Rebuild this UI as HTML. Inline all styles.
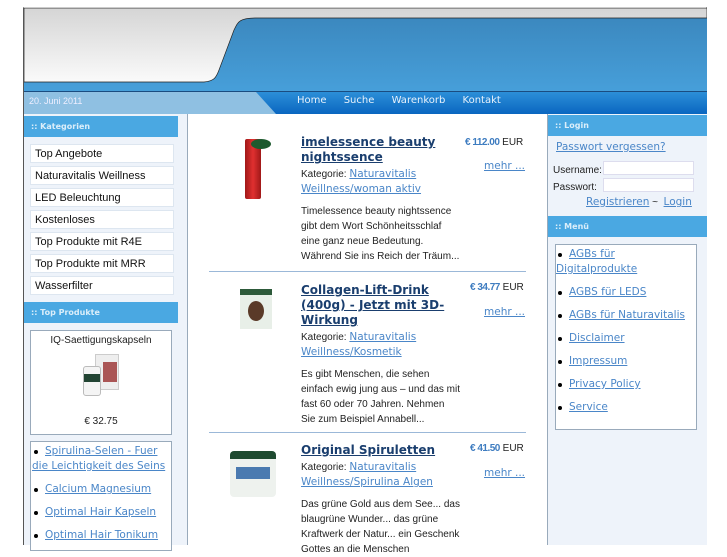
<!DOCTYPE html><html><head><meta charset="utf-8"><style>
*{margin:0;padding:0;box-sizing:border-box}
body{width:727px;height:545px;overflow:hidden;background:#fff;position:relative;font-family:"Liberation Sans",sans-serif;font-size:10px;color:#222}
.a{position:absolute}
a{color:#4a86c8;text-decoration:underline;font-family:"DejaVu Sans",sans-serif;font-size:10.5px}
.hd{background:#4aa8e2;color:#dbeefa;font:bold 8px "DejaVu Sans",sans-serif;padding-left:7px;line-height:21px}
.cat{position:absolute;left:30px;width:144px;height:19px;background:#fff;border:1px solid #dde6f0;font-size:11px;line-height:19px;padding-left:4px;color:#111}
.t{font:bold 12px "DejaVu Sans",sans-serif;color:#1a3e6e;text-decoration:underline;line-height:15px}
.d{line-height:15px;font-size:10px}
.pr{color:#3e7cc0;font-weight:bold;letter-spacing:-0.5px}
ul{list-style:none}
li{position:relative;padding-left:13px;margin-bottom:8px;line-height:15px}
li:before{content:"";position:absolute;left:2px;top:6px;width:4px;height:4px;border-radius:50%;background:#000}
</style></head><body>
<div class="a" style="left:23px;top:7px;width:684px;height:538px;border-left:1px solid #555;border-right:1px solid #555;border-top:1px solid #ccc"></div>
<svg class="a" style="left:24px;top:8px" width="683" height="106">
<defs><linearGradient id="g" x1="0" y1="0" x2="0" y2="1"><stop offset="0" stop-color="#d5d5d5"/><stop offset="1" stop-color="#fafafa"/></linearGradient>
<linearGradient id="b" x1="0" y1="0" x2="0" y2="1"><stop offset="0" stop-color="#3a85bb"/><stop offset="1" stop-color="#4aa6e2"/></linearGradient>
<linearGradient id="n" x1="0" y1="0" x2="0" y2="1"><stop offset="0" stop-color="#2c8fd8"/><stop offset="1" stop-color="#0a66c0"/></linearGradient></defs>
<rect width="683" height="106" fill="url(#b)"/>
<path d="M0 0H683V10H232C215 10 214 14 210 22L195 62C192 70 190 73 180 74H0Z" fill="url(#g)" stroke="#222" stroke-width="0.7"/>
<rect y="84" width="683" height="22" fill="url(#n)"/>
<rect y="83" width="683" height="1" fill="#1a4c80"/>
<path d="M0 84H232L252 106H0Z" fill="#8fc0e2"/>
</svg>
<div class="a" style="left:29px;top:96px;color:#eef;font-size:9px">20. Juni 2011</div>
<div class="a" style="left:297px;top:95px;color:#e8f2fc;font:10px 'DejaVu Sans',sans-serif;word-spacing:14px">Home Suche Warenkorb&nbsp;Kontakt</div>
<div class="a" style="left:24px;top:114px;width:164px;height:431px;background:#eef3fa;border-right:1px solid #9ab"></div>
<div class="a hd" style="left:24px;top:116px;width:154px">:: Kategorien</div>
<div class="cat" style="top:144px">Top Angebote</div>
<div class="cat" style="top:166px">Naturavitalis Weillness</div>
<div class="cat" style="top:188px">LED Beleuchtung</div>
<div class="cat" style="top:210px">Kostenloses</div>
<div class="cat" style="top:232px">Top Produkte mit R4E</div>
<div class="cat" style="top:254px">Top Produkte mit MRR</div>
<div class="cat" style="top:276px">Wasserfilter</div>
<div class="a hd" style="left:24px;top:302px;width:154px">:: Top Produkte</div>
<div class="a" style="left:30px;top:330px;width:142px;height:105px;background:#fff;border:1px solid #9ab;text-align:center">
<div style="margin-top:4px">IQ-Saettigungskapseln</div>
<div style="margin:8px auto 0;width:40px;height:48px;position:relative"><div class="a" style="left:14px;top:0;width:24px;height:36px;background:#eee;border:1px solid #ccc"></div><div class="a" style="left:22px;top:8px;width:14px;height:20px;background:#a55"></div><div class="a" style="left:2px;top:12px;width:18px;height:30px;background:#f4f4f4;border:1px solid #bbb;border-radius:3px"></div><div class="a" style="left:3px;top:20px;width:16px;height:8px;background:#243"></div></div>
<div style="margin-top:14px">€ 32.75</div></div>
<div class="a" style="left:30px;top:441px;width:142px;height:110px;background:#fff;border:1px solid #9ab;padding:2px 2px 0 1px">
<ul><li><a>Spirulina-Selen - Fuer</a><br><a style="margin-left:-13px">die Leichtigkeit des Seins</a></li><li><a>Calcium Magnesium</a></li><li><a>Optimal Hair Kapseln</a></li><li><a>Optimal Hair Tonikum</a></li></ul></div>

<div class="a" style="left:547px;top:114px;width:160px;height:431px;background:#eef3fa;border-left:1px solid #9ab"></div>
<div class="a hd" style="left:548px;top:115px;width:159px">:: Login</div>
<div class="a" style="left:556px;top:141px"><a>Passwort vergessen?</a></div>
<div class="a" style="left:553px;top:162px;line-height:17px">Username:<br>Passwort:</div>
<div class="a" style="left:603px;top:161px;width:91px;height:14px;background:#fff;border:1px solid #dde"></div>
<div class="a" style="left:603px;top:178px;width:91px;height:14px;background:#fff;border:1px solid #dde"></div>
<div class="a" style="left:586px;top:196px"><a>Registrieren</a> ~ &nbsp;<a>Login</a></div>
<div class="a hd" style="left:548px;top:216px;width:159px">:: Menü</div>
<div class="a" style="left:555px;top:244px;width:142px;height:186px;background:#fff;border:1px solid #9ab;padding:2px 2px 0 0">
<ul><li><a>AGBs für</a><br><a style="margin-left:-13px">Digitalprodukte</a></li><li><a>AGBS für LEDS</a></li><li><a>AGBs für Naturavitalis</a></li><li><a>Disclaimer</a></li><li><a>Impressum</a></li><li><a>Privacy Policy</a></li><li><a>Service</a></li></ul></div>

<div class="a" style="left:245px;top:139px;width:16px;height:60px;background:linear-gradient(90deg,#a01818,#e03030,#a01818);border-radius:2px"></div>
<div class="a" style="left:251px;top:139px;width:20px;height:10px;background:#1d5a2e;border-radius:50%"></div>
<div class="a" style="left:301px;top:135px;width:160px"><div class="t">imelessence beauty nightssence</div>
<div class="d" style="margin-top:2px">Kategorie: <a>Naturavitalis Weillness/woman aktiv</a></div>
<div class="d" style="margin-top:7px">Timelessence beauty nightssence gibt dem Wort Schönheitsschlaf eine ganz neue Bedeutung. Während Sie ins Reich der Träum...</div></div>
<div class="a" style="left:465px;top:137px"><span class="pr">€ 112.00</span> EUR</div>
<div class="a" style="left:484px;top:160px"><a>mehr ...</a></div>
<div class="a" style="left:209px;top:271px;width:317px;height:1px;background:#9bb8d8"></div>

<div class="a" style="left:240px;top:289px;width:32px;height:40px;background:#e8efe8;border-top:6px solid #2d5a3a"><div style="margin:6px auto;width:16px;height:20px;background:#5a3a28;border-radius:50%"></div></div>
<div class="a" style="left:301px;top:283px;width:160px"><div class="t">Collagen-Lift-Drink (400g) - Jetzt mit 3D-Wirkung</div>
<div class="d" style="margin-top:2px">Kategorie: <a>Naturavitalis Weillness/Kosmetik</a></div>
<div class="d" style="margin-top:7px">Es gibt Menschen, die sehen einfach ewig jung aus – und das mit fast 60 oder 70 Jahren. Nehmen Sie zum Beispiel Annabell...</div></div>
<div class="a" style="left:470px;top:282px"><span class="pr">€ 34.77</span> EUR</div>
<div class="a" style="left:484px;top:306px"><a>mehr ...</a></div>
<div class="a" style="left:209px;top:432px;width:317px;height:1px;background:#9bb8d8"></div>

<div class="a" style="left:230px;top:451px;width:46px;height:46px;background:#eef2ee;border-top:8px solid #1e4a30;border-radius:4px"><div style="margin:8px 6px;height:12px;background:#4a7ab0"></div></div>
<div class="a" style="left:301px;top:443px;width:160px"><div class="t">Original Spiruletten</div>
<div class="d" style="margin-top:2px">Kategorie: <a>Naturavitalis Weillness/Spirulina Algen</a></div>
<div class="d" style="margin-top:7px">Das grüne Gold aus dem See... das blaugrüne Wunder... das grüne Kraftwerk der Natur... ein Geschenk Gottes an die Menschen</div></div>
<div class="a" style="left:470px;top:443px"><span class="pr">€ 41.50</span> EUR</div>
<div class="a" style="left:484px;top:467px"><a>mehr ...</a></div>
</body></html>
